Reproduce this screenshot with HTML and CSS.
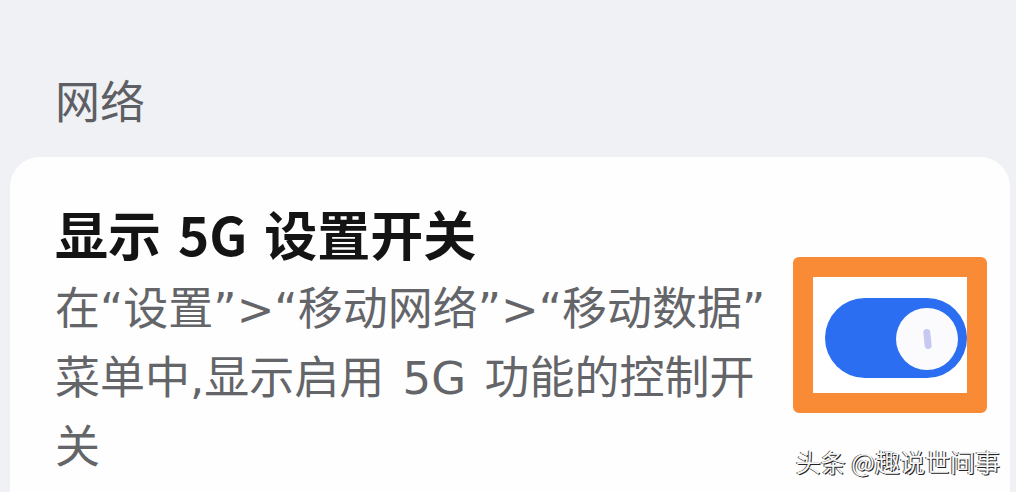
FILE: index.html
```html
<!DOCTYPE html>
<html lang="zh-CN">
<head>
  <meta charset="UTF-8" />
  <meta name="viewport" content="width=device-width, initial-scale=1.0" />
  <title>网络</title>
  <link rel="stylesheet" href="styles.css">
</head>
<body>
  <h2 class="group-title">网络</h2>
  <div class="card">
    <div class="row">
      <div class="text">
        <div class="item-title">显示 5G 设置开关</div>
        <div class="item-desc">在“设置”&gt;“移动网络”&gt;“移动数据”菜单中,显示启用 5G 功能的控制开关</div>
      </div>
      <div class="mark">
        <div class="switch on">
          <span class="knob"><i class="dot"></i></span>
        </div>
      </div>
    </div>
  </div>
  <div class="watermark">头条 @趣说世间事</div>
</body>
</html>
```

FILE: styles.css
```css
* { box-sizing: border-box; margin: 0; padding: 0; }
html, body { height: 100%; overflow: hidden; }
body {
  font-family: "Noto Sans CJK SC", "Noto Sans", sans-serif;
  background: #f0f1f5;
  position: relative;
}
.group-title {
  font-size: 45px;
  font-weight: normal;
  line-height: 50px;
  color: #5e5f64;
  margin: 75px 0 0 55px;
}
.card {
  margin: 32px 6px 0 10px;
  background: #fefefe;
  border-radius: 30px 30px 0 0;
  padding: 46px 23px 40px 45px;
  min-height: 400px;
}
.row {
  display: flex;
  align-items: flex-start;
}
.text {
  flex: 1;
  min-width: 0;
}
.item-title {
  font-size: 53px;
  font-weight: bold;
  line-height: 60px;
  word-spacing: 5px;
  color: #141414;
}
.item-desc {
  margin-top: 12px;
  font-family: "DejaVu Sans", "Noto Sans CJK SC", sans-serif;
  font-size: 45px;
  line-height: 69px;
  word-spacing: 4px;
  color: #646569;
}
.mark {
  margin-top: 54px;
  margin-left: 10px;
  width: 194px;
  height: 156px;
  flex-shrink: 0;
  border: 20px solid #f98b36;
  border-radius: 6px;
  background: #fff;
  display: flex;
  align-items: center;
  justify-content: flex-end;
  padding-top: 6px;
}
.switch {
  width: 142px;
  height: 80px;
  border-radius: 40px;
  background: #2b6ef2;
  position: relative;
}
.knob {
  position: absolute;
  right: 9px;
  top: 10px;
  width: 62px;
  height: 62px;
  border-radius: 50%;
  background: #fbfbfe;
  display: flex;
  align-items: center;
  justify-content: center;
}
.dot {
  display: block;
  width: 7px;
  height: 20px;
  border-radius: 4px;
  background: #c8c9f1;
  transform: rotate(-6deg);
}
.watermark {
  position: absolute;
  right: 16px;
  bottom: 16px;
  font-size: 25px;
  line-height: 30px;
  color: #f6f6f6;
  text-shadow: 1px 1px 0 #222, -1px 0 0 #555;
}
```
